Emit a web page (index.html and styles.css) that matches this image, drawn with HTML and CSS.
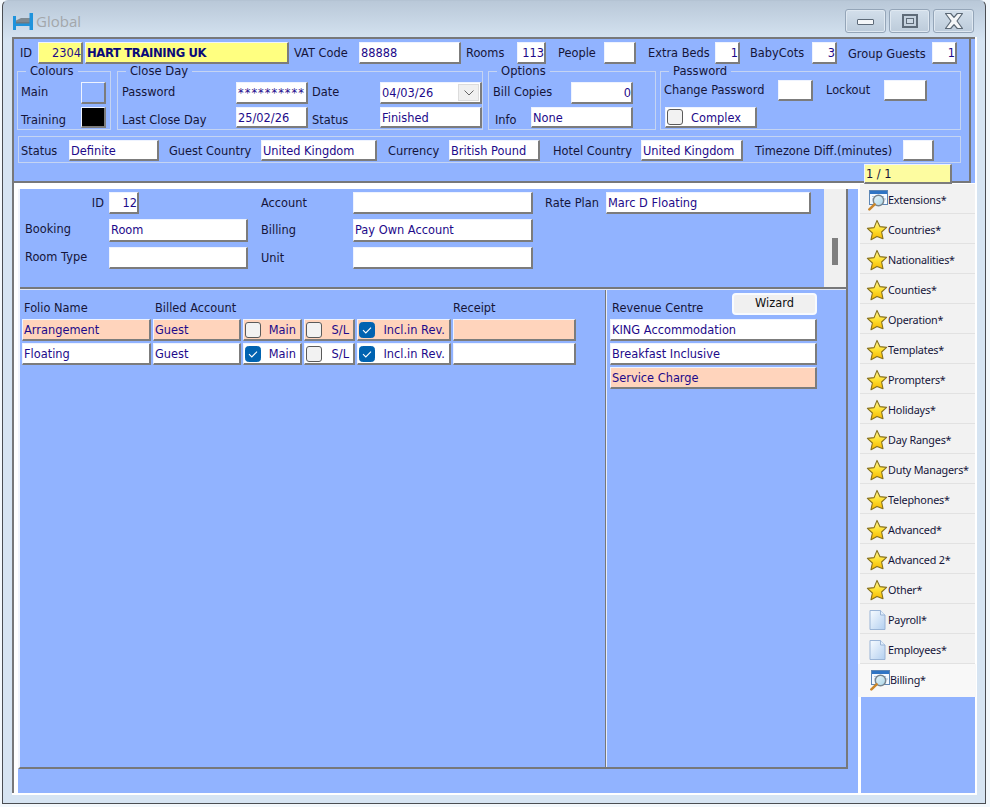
FILE: index.html
```html
<!DOCTYPE html>
<html lang="en">
<head>
<meta charset="utf-8">
<title>Global</title>
<link rel="stylesheet" href="styles.css">
</head>
<body>
<svg class="defs" width="0" height="0" aria-hidden="true">
  <defs>
    <linearGradient id="gold" x1="0" y1="0" x2="0" y2="1">
      <stop offset="0" stop-color="#fff7a0"/><stop offset=".5" stop-color="#ffe02e"/><stop offset="1" stop-color="#f5b400"/>
    </linearGradient>
    <linearGradient id="paper" x1="0" y1="0" x2="1" y2="1">
      <stop offset="0" stop-color="#f8fcff"/><stop offset="1" stop-color="#b3cff0"/>
    </linearGradient>
    <linearGradient id="lens" x1="0" y1="0" x2="1" y2="1">
      <stop offset="0" stop-color="#eaf7fb"/><stop offset="1" stop-color="#a9d4e6"/>
    </linearGradient>
    <symbol id="star" viewBox="0 0 22 22">
      <path d="M11 1.4l2.9 6.2 6.7.8-5 4.6 1.4 6.7L11 17.4l-6 3.3 1.4-6.7-5-4.6 6.7-.8z" fill="url(#gold)" stroke="#86701c" stroke-width="1.1" stroke-linejoin="round"/>
    </symbol>
    <symbol id="doc" viewBox="0 0 22 22">
      <path d="M4.5 3h1v17h-1z" fill="#a8bedb"/>
      <path d="M4 1.5h10.5l4.5 4.5v14.5H4z" fill="url(#paper)" stroke="#9ab4d6"/>
      <path d="M14.5 1.5V6H19" fill="#e4effb" stroke="#9ab4d6"/>
    </symbol>
    <symbol id="find" viewBox="0 0 22 22">
      <rect x="3.5" y="1.5" width="18" height="14" fill="#f4f9ff" stroke="#5d86b5"/>
      <rect x="4" y="2" width="17" height="3" fill="#2f74c4"/>
      <path d="M6 7.5h12M6 10h2M18 10h2" stroke="#a9c3e0"/>
      <circle cx="12.5" cy="11.5" r="5.2" fill="url(#lens)" stroke="#78858f" stroke-width="1.5"/>
      <path d="M8.6 15.4L3.4 20.4" stroke="#c9862c" stroke-width="2.6" stroke-linecap="round"/>
    </symbol>
    <symbol id="tick" viewBox="0 0 16 16">
      <rect x=".5" y=".5" width="15" height="15" rx="3" fill="#0063b1" stroke="#0063b1"/>
      <path d="M4 8.2l2.8 2.8L12 5.6" fill="none" stroke="#fff" stroke-width="1.1"/>
    </symbol>
  </defs>
</svg>

<div class="window">
  <header class="titlebar">
    <svg class="bed" width="20" height="17" viewBox="0 0 20 17" aria-hidden="true">
      <path d="M3 8.5h14V13H3z" fill="#6f7a82"/>
      <path d="M3 7.5l5-2.5h9v4H3z" fill="#7f8a92"/>
      <path d="M0 3h3v14H0zM16.5 0H20v17h-3.5zM3 10.5h14V13H3z" fill="#1f93dc"/>
    </svg>
    <span class="title">Global</span>
    <div class="controls">
      <div class="ctl"><span class="ctl-min"></span></div>
      <div class="ctl"><span class="ctl-max"></span></div>
      <div class="ctl">
        <svg width="22" height="18" viewBox="0 0 22 18" aria-hidden="true"><path d="M2.5 1.5h5.2L11 5.4l3.3-3.9h5.2L14 9l5.5 7.5h-5.2L11 12.6l-3.3 3.9H2.5L8 9z" fill="#f4f6f8" stroke="#5b6875" stroke-width="1.2" stroke-linejoin="round"/></svg>
      </div>
    </div>
  </header>

  <div class="frame">
    <section class="top">
      <div class="top-inner">
        <div class="row1">
          <span class="l">ID</span><div class="i num yel w45">2304</div>
          <div class="i yel bold w204">HART TRAINING UK</div>
          <span class="l">VAT Code</span><div class="i w102">88888</div>
          <span class="l">Rooms</span><div class="i num w29">113</div>
          <span class="l">People</span><div class="i w32"></div>
          <span class="l">Extra Beds</span><div class="i num w25">1</div>
          <span class="l">BabyCots</span><div class="i num w25">3</div>
          <span class="l d1">Group Guests</span><div class="i num w25">1</div>
        </div>

        <div class="groups">
          <fieldset class="group g-colours">
            <legend class="lg lg-a">Colours</legend>
            <div class="grid gc">
              <span class="l u1">Main</span><div class="i swatch"></div>
              <span class="l d2">Training</span><div class="i swatch black"></div>
            </div>
          </fieldset>
          <fieldset class="group g-close">
            <legend class="lg lg-a">Close Day</legend>
            <div class="grid gd">
              <span class="l u1">Password</span><div class="i w72 stars">**********</div>
              <span class="l u1">Date</span>
              <div class="i select"><span>04/03/26</span><span class="drop"><svg width="10" height="6" viewBox="0 0 10 6" aria-hidden="true"><path d="M.5.5L5 5 9.5.5" fill="none" stroke="#666"/></svg></span></div>
              <span class="l d2">Last Close Day</span><div class="i w72">25/02/26</div>
              <span class="l d2">Status</span><div class="i">Finished</div>
            </div>
          </fieldset>
          <fieldset class="group g-options">
            <legend class="lg lg-b">Options</legend>
            <div class="grid go">
              <span class="l s2 u1">Bill Copies</span><div class="i num">0</div>
              <span class="l info">Info</span><div class="i s2">None</div>
            </div>
          </fieldset>
          <fieldset class="group g-pass">
            <legend class="lg lg-c">Password</legend>
            <div class="grid gp">
              <span class="l u1">Change Password</span><div class="i w35"></div>
              <span class="l u1">Lockout</span><div class="i w43"></div>
              <div class="i chk complex"><span class="box"></span><span>Complex</span></div>
            </div>
          </fieldset>
        </div>

        <div class="statusbox">
          <span class="l">Status</span><div class="i w90">Definite</div>
          <span class="l">Guest Country</span><div class="i w116">United Kingdom</div>
          <span class="l">Currency</span><div class="i w91">British Pound</div>
          <span class="l">Hotel Country</span><div class="i w102">United Kingdom</div>
          <span class="l">Timezone Diff.(minutes)</span><div class="i w31"></div>
        </div>

        <div class="i pager">1 / 1</div>
      </div>
    </section>

    <div class="content">
      <main class="main">
        <div class="work">
          <div class="panes">
            <section class="upper">
              <div class="upper-fields">
                <span class="l idl">ID</span><div class="i num w30">12</div>
                <span class="l">Account</span><div class="i w180"></div>
                <span class="l">Rate Plan</span><div class="i w205">Marc D Floating</div>
                <span class="l u2">Booking</span><div class="i w139">Room</div>
                <span class="l u1">Billing</span><div class="i w180">Pay Own Account</div>
                <span class="s2"></span>
                <span class="l u1">Room Type</span><div class="i w139"></div>
                <span class="l">Unit</span><div class="i w180"></div>
                <span class="s2"></span>
              </div>
              <div class="scroll"><div class="thumb"></div></div>
            </section>
            <section class="lower">
              <div class="folios">
                <span class="l hd">Folio Name</span>
                <span class="l hd s4">Billed Account</span>
                <span class="l hd flush">Receipt</span>

                <div class="i peach">Arrangement</div>
                <div class="i peach">Guest</div>
                <div class="i chk peach"><span class="box"></span><span>Main</span></div>
                <div class="i chk peach"><span class="box"></span><span>S/L</span></div>
                <div class="i chk peach"><svg class="tick" width="16" height="16" aria-hidden="true"><use href="#tick"/></svg><span>Incl.in Rev.</span></div>
                <div class="i peach last"></div>

                <div class="i">Floating</div>
                <div class="i">Guest</div>
                <div class="i chk"><svg class="tick" width="16" height="16" aria-hidden="true"><use href="#tick"/></svg><span>Main</span></div>
                <div class="i chk"><span class="box"></span><span>S/L</span></div>
                <div class="i chk"><svg class="tick" width="16" height="16" aria-hidden="true"><use href="#tick"/></svg><span>Incl.in Rev.</span></div>
                <div class="i last"></div>
              </div>
              <div class="revenue">
                <div class="rev-head">
                  <span class="l hd">Revenue Centre</span>
                  <div class="wizard">Wizard</div>
                </div>
                <div class="i rev">KING Accommodation</div>
                <div class="i rev">Breakfast Inclusive</div>
                <div class="i rev peach">Service Charge</div>
              </div>
            </section>
          </div>
        </div>
      </main>

      <aside class="side">
        <nav class="tabs">
          <div class="tab"><svg class="ico" width="22" height="22" aria-hidden="true"><use href="#find"/></svg><span>Extensions*</span></div>
          <div class="tab"><svg class="ico" width="22" height="22" aria-hidden="true"><use href="#star"/></svg><span>Countries*</span></div>
          <div class="tab"><svg class="ico" width="22" height="22" aria-hidden="true"><use href="#star"/></svg><span>Nationalities*</span></div>
          <div class="tab"><svg class="ico" width="22" height="22" aria-hidden="true"><use href="#star"/></svg><span>Counties*</span></div>
          <div class="tab"><svg class="ico" width="22" height="22" aria-hidden="true"><use href="#star"/></svg><span>Operation*</span></div>
          <div class="tab"><svg class="ico" width="22" height="22" aria-hidden="true"><use href="#star"/></svg><span>Templates*</span></div>
          <div class="tab"><svg class="ico" width="22" height="22" aria-hidden="true"><use href="#star"/></svg><span>Prompters*</span></div>
          <div class="tab"><svg class="ico" width="22" height="22" aria-hidden="true"><use href="#star"/></svg><span>Holidays*</span></div>
          <div class="tab"><svg class="ico" width="22" height="22" aria-hidden="true"><use href="#star"/></svg><span>Day Ranges*</span></div>
          <div class="tab"><svg class="ico" width="22" height="22" aria-hidden="true"><use href="#star"/></svg><span>Duty Managers*</span></div>
          <div class="tab"><svg class="ico" width="22" height="22" aria-hidden="true"><use href="#star"/></svg><span>Telephones*</span></div>
          <div class="tab"><svg class="ico" width="22" height="22" aria-hidden="true"><use href="#star"/></svg><span>Advanced*</span></div>
          <div class="tab"><svg class="ico" width="22" height="22" aria-hidden="true"><use href="#star"/></svg><span>Advanced 2*</span></div>
          <div class="tab"><svg class="ico" width="22" height="22" aria-hidden="true"><use href="#star"/></svg><span>Other*</span></div>
          <div class="tab"><svg class="ico" width="22" height="22" aria-hidden="true"><use href="#doc"/></svg><span>Payroll*</span></div>
          <div class="tab"><svg class="ico" width="22" height="22" aria-hidden="true"><use href="#doc"/></svg><span>Employees*</span></div>
          <div class="tab active"><svg class="ico" width="22" height="22" aria-hidden="true"><use href="#find"/></svg><span>Billing*</span></div>
        </nav>
        <div class="side-fill"></div>
      </aside>
    </div>
  </div>
</div>
</body>
</html>
```
FILE: styles.css
```css
* { box-sizing: border-box; }
html, body { margin: 0; height: 100%; overflow: hidden; }
body {
  background: #f3f8fc;
  font: 11.4px/14px "DejaVu Sans", sans-serif;
  color: #15153a;
}
.defs { display: block; height: 0; }

.window {
  width: 984px;
  height: 804px;
  margin-left: 2px;
  border: 1px solid #4a4d52;
  border-top-color: #b4c3d3;
  border-radius: 6px 6px 0 0;
  background: linear-gradient(#b9c8d8 0, #d6e4f2 40px, #d6e4f2 100%);
  overflow: hidden;
}

.titlebar { display: flex; align-items: flex-start; height: 36px; padding-left: 10px; }
.bed { margin-top: 12px; }
.title { margin: 11px 0 0 3px; font: 15px/18px "Open Sans", sans-serif; color: #a3a7ab; }
.controls { display: flex; gap: 3px; margin-left: auto; margin-right: 11px; padding-top: 8px; }
.ctl {
  display: flex; align-items: center; justify-content: center;
  width: 41px; height: 24px;
  border: 1px solid #94a5b8; border-radius: 3px;
  background: linear-gradient(#d3dfeb, #bccbda);
  box-shadow: inset 0 0 0 1px #dfe8f1;
}
.ctl-min { width: 17px; height: 6px; background: #f4f6f8; border: 1px solid #5d6a78; border-radius: 1px; margin-top: 2px; }
.ctl-max { width: 16px; height: 14px; border: 2px solid #5d6a78; background: #ccd8e4; box-shadow: inset 0 0 0 2px #c4d1de, inset 0 0 0 3px #5d6a78; }

.frame { width: 965px; height: 758px; margin-left: 9px; background: #fff; }

.top {
  width: 963px; height: 146px;
  background: #91b3ff;
  border-left: 2px solid #77787a;
  border-top: 2px solid #77787a;
}
.top-inner {
  position: relative;
  width: 957px; height: 144px;
  padding-top: 3px;
  border-right: 2px solid #77787a;
  border-bottom: 2px solid #77787a;
}

.l { align-self: center; white-space: nowrap; }
.u1 { margin-bottom: 2px; }
.u2 { margin-bottom: 4px; }
.d1 { margin-top: 2px; }
.d2 { margin-top: 4px; }
.s2 { grid-column: span 2; }
.s4 { grid-column: span 4; }

.i {
  min-width: 0;
  padding: 2px 1px 0;
  background: #fff;
  border: 1px solid #eef3ff;
  border-right: 2px solid #7c7c7c;
  border-bottom: 2px solid #7c7c7c;
  color: #1d0a8a;
  line-height: 16px;
  white-space: nowrap;
  overflow: hidden;
}
.num { text-align: right; padding-right: 0; }
.yel { background: #ffff80; }
.bold { font-weight: 700; font-size: 11.6px; letter-spacing: -.35px; color: #0a0a7a; }
.peach { background: #ffd4bc; }
.stars { letter-spacing: 1px; padding-top: 1px; line-height: 18px; }
.w25 { width: 25px; } .w29 { width: 29px; } .w30 { width: 30px; } .w31 { width: 31px; }
.w32 { width: 32px; } .w35 { width: 35px; } .w43 { width: 43px; } .w45 { width: 45px; }
.w72 { width: 72px; } .w90 { width: 90px; } .w91 { width: 91px; } .w102 { width: 102px; }
.w116 { width: 116px; } .w139 { width: 139px; } .w180 { width: 180px; } .w204 { width: 204px; } .w205 { width: 205px; }

.row1 {
  display: grid;
  height: 22px;
  padding-left: 6px;
  grid-template-columns: 18px 47px 209px 65px 107px 51px 41px 46px 44px 67px 35px 62px 36px 84px 25px;
}

.groups { display: flex; padding-left: 3px; }
.group {
  min-width: 0; margin: 0; padding: 4px 0 0;
  height: 66px;
  border: 1px solid #c5d4f2;
}
.g-colours { width: 94px; margin-right: 6px; }
.g-close { width: 366px; margin-right: 5px; }
.g-options { width: 168px; margin-right: 4px; }
.g-pass { width: 301px; padding-top: 2px; }
.lg { padding: 0 4px; line-height: 14px; white-space: nowrap; font-size: 11.6px; }
.lg-a, .lg-b, .lg-c { margin-left: 8px; }

.grid { display: grid; }
.gc { padding-left: 3px; grid-template-columns: 60px 25px; grid-template-rows: 22px 21px; row-gap: 3px; }
.gd { padding-left: 4px; grid-template-columns: 114px 76px 68px 102px; grid-template-rows: 22px 21px; row-gap: 3px; }
.go { padding-left: 4px; grid-template-columns: 38px 40px 62px; grid-template-rows: 22px 21px; row-gap: 3px; }
.gp { padding-left: 3px; grid-template-columns: 114px 48px 58px 43px; grid-template-rows: 21px 21px; row-gap: 6px; }
.info { padding-left: 2px; margin-top: 4px; }
.swatch { background: #91b3ff; }
.black { background: #000; }
.select { display: flex; align-items: center; justify-content: space-between; padding: 0 1px; }
.drop { display: flex; align-items: center; justify-content: center; width: 21px; height: 17px; background: #f0f0f0; border: 1px solid #dcdcdc; }

.chk { display: flex; align-items: center; justify-content: space-between; padding: 0 4px 0 1px; }
.chk span:last-child { padding-top: 1px; }
.box { flex: none; width: 16px; height: 16px; background: #f2f2f2; border: 1px solid #5a5a5a; border-radius: 3px; }
.tick { flex: none; }
.complex { grid-column: span 2; width: 92px; margin-left: 1px; padding-right: 14px; }

.statusbox {
  display: grid;
  height: 27px; width: 943px;
  margin: 6px 0 0 4px; padding: 3px 0 0 2px;
  border: 1px solid #c5d4f2;
  grid-template-columns: 48px 100px 92px 127px 61px 104px 88px 114px 148px 31px;
  grid-template-rows: 21px;
}

.pager {
  position: absolute;
  left: 850px; top: 125px;
  width: 88px; height: 20px;
  padding-top: 1px;
  background: #fdfca0;
  color: #15153a;
}

.content { display: flex; height: 610px; }
.main { width: 846px; padding: 6px 0 0 4px; border-left: 2px solid #77787a; display: flex; }
.work { flex: 1; background: #91b3ff; }
.panes {
  display: flex; flex-direction: column;
  width: 830px; height: 580px;
  border-left: 2px solid #f2f5fc;
  border-right: 2px solid #77787a;
  border-bottom: 2px solid #77787a;
}

.upper { display: flex; height: 100px; border-bottom: 2px solid #77787a; flex: none; }
.upper-fields {
  flex: 1;
  display: grid;
  padding: 3px 0 0 5px;
  align-content: start;
  grid-template-columns: 84px 152px 92px 192px 61px 205px;
  grid-template-rows: 22px 23px 22px;
  row-gap: 5px;
}
.idl { justify-self: end; margin-right: 5px; }
.scroll { flex: none; width: 22px; background: #f0f0f0; padding: 49px 0 0 8px; }
.thumb { width: 6px; height: 27px; background: #7f7f7f; }

.lower { flex: 1; display: flex; border-top: 1px solid #e4e9f6; }
.folios {
  width: 586px; padding: 3px 0 0 2px;
  border-right: 1px solid #77787a;
  box-shadow: 1px 0 0 #e8edf8;
  display: grid;
  align-content: start;
  grid-template-columns: 131px 90px 61px 53px 96px 123px;
  grid-template-rows: 24px 22px 22px;
  row-gap: 2px;
}
.hd { margin-top: 5px; padding-left: 2px; }
.flush { padding-left: 0; }
.folios > .i { margin-right: 2px; }
.folios > .last { margin-right: 0; }
.revenue { flex: 1; padding: 3px 0 0 4px; display: flex; flex-direction: column; gap: 2px; }
.rev-head { display: flex; justify-content: space-between; height: 24px; width: 207px; align-items: flex-start; }
.rev-head .hd { margin-top: 6px; }
.rev { width: 207px; height: 22px; }
.wizard {
  width: 85px; height: 22px;
  background: #f0f0f0;
  border: 2px solid #f8fbff; border-radius: 4px;
  text-align: center;
  line-height: 17px;
  color: #111;
}

.side { width: 119px; height: 610px; padding-top: 1px; display: flex; flex-direction: column; }
.tabs { display: flex; flex-direction: column; }
.tab {
  display: flex; align-items: center;
  width: 115px; height: 30px;
  margin-left: 2px;
  padding: 2px 0 0 6px;
  background: #f2f2f2;
  border-bottom: 1px solid #e2e2e2;
  color: #15153a;
  font: 10.8px/14px "Noto Sans", sans-serif;
  letter-spacing: -.2px;
  white-space: nowrap;
}
.active { width: 118px; height: 33px; margin-left: 0; padding: 0 0 2px 10px; background: #f8f8f8; border-bottom: 0; }
.ico { flex: none; }
.side-fill { flex: 1; margin: 0 2px 0 3px; background: #91b3ff; }
```
